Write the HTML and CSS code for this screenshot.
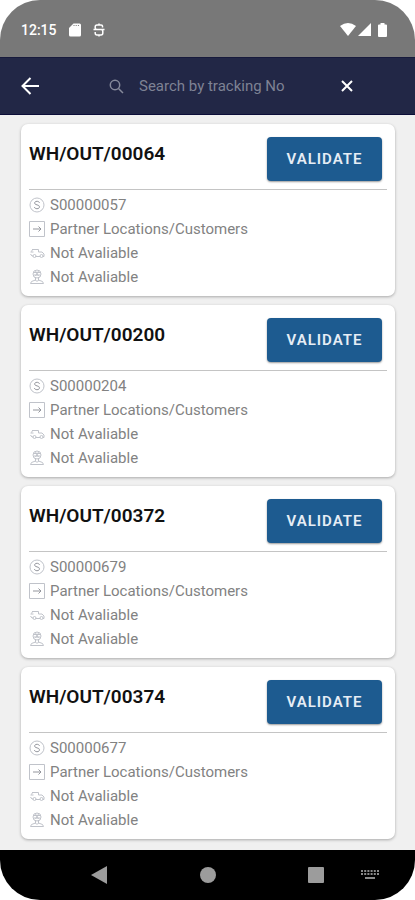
FILE: index.html
```
<!DOCTYPE html>
<html lang="en">
  <head>
    <meta charset="utf-8">
    <meta name="viewport" content="width=device-width, initial-scale=1">
    <title>Delivery Orders</title>
    <link rel="stylesheet" href="styles.css">
  </head>

  <body>
    <!-- icons shared by all cards -->
    <svg class="sprite" aria-hidden="true">
      <symbol id="i-source" viewBox="0 0 16 16">
        <circle cx="8" cy="8" r="7"/>
        <path class="dark" d="M10.500 5.800C10 4.600 9 4.300 8 4.300C6.500 4.300 5.600 5.100 5.600 6.100C5.600 8.400 10.500 7.300 10.500 9.800C10.500 11 9.500 11.700 8 11.700C6.700 11.700 5.700 11.200 5.300 10"/>
      </symbol>
      <symbol id="i-dest" viewBox="0 0 16 16">
        <path d="M.5.500h15v15H.5z"/>
        <path class="dark" d="M4 8h8M9.500 5.500L12 8l-2.500 2.500"/>
      </symbol>
      <symbol id="i-truck" viewBox="0 0 16 16">
        <path d="M4 11H3L1.500 9M1.500 7h3M3 4.500h6.500V7h3.500l2 2v2.500h-1M6.500 11.500H11M3.500 4.500L2.500 6.500"/>
        <circle cx="5.500" cy="11" r="1.500"/>
        <circle cx="12.500" cy="11" r="1.500"/>
      </symbol>
      <symbol id="i-person" viewBox="0 0 16 16">
        <circle cx="8" cy="5" r="4"/>
        <path d="M5 3.500h6M5 6h6M6.500 2l3 5M9.500 2l-3 5M6.500 9v2.500M9.500 9v2.500"/>
        <path d="M6.500 11L2.500 12.500L1.500 14.500h13l-1-2L9.500 11L8 12.500z"/>
      </symbol>
    </svg>

    <div class="phone">
      <header class="status">
        <div class="status-side">
          <span class="clock">12:15</span>
          <svg class="sd" viewBox="0 0 12 14"><path d="M4.500.500H10.500Q12 .5 12 2V12Q12 13.500 10.500 13.500H1.500Q0 13.500 0 12V5z"/><path class="slots" d="M5 2v1M7.200 2v1M9.400 2v1"/></svg>
          <svg class="s-badge" viewBox="0 0 12 14"><path d="M9.500 4.500V3Q9.500 2 8 2H4Q2.200 2 2.200 4V5Q2.200 6.500 4 6.500H8Q9.800 6.500 9.800 8.500V10Q9.800 12 8 12H4Q2.200 12 2.200 10V9M.5 6.500h11M6 .5V2M6 12v1.500"/></svg>
        </div>
        <div class="status-side signals">
          <svg class="wifi" viewBox="0 0 16 13"><path d="M0 3Q8-3 16 3L8 13z"/></svg>
          <svg class="cell" viewBox="0 0 13 13"><path d="M13 0V13H0z"/></svg>
          <svg class="battery" viewBox="0 0 9 14"><path d="M2.500 0h4v1.500H8Q9 1.500 9 2.500V13Q9 14 8 14H1Q0 14 0 13V2.500Q0 1.500 1 1.500h1.500z"/></svg>
        </div>
      </header>

      <div class="toolbar">
        <button class="back" aria-label="Back">
          <svg viewBox="0 0 18 18"><path d="M18 9H1.500M9.500 1L1.500 9l8 8"/></svg>
        </button>
        <form class="search">
          <label for="tracking" aria-label="Search">
            <svg viewBox="0 0 15 15"><circle cx="6" cy="6" r="4.700"/><path d="M9.500 9.500L14 14"/></svg>
          </label>
          <input type="text" id="tracking" placeholder="Search by tracking No">
          <button type="reset" class="clear" aria-label="Clear">
            <svg viewBox="0 0 12 12"><path d="M1 1l10 10M11 1L1 11"/></svg>
          </button>
        </form>
      </div>

      <main class="orders">
        <article class="card">
          <div class="card-head">
            <h2>WH/OUT/00064</h2>
            <button class="validate">VALIDATE</button>
          </div>
          <ul>
            <li><svg><use href="#i-source"/></svg>S00000057</li>
            <li><svg><use href="#i-dest"/></svg>Partner Locations/Customers</li>
            <li><svg><use href="#i-truck"/></svg>Not Avaliable</li>
            <li><svg><use href="#i-person"/></svg>Not Avaliable</li>
          </ul>
        </article>
        <article class="card">
          <div class="card-head">
            <h2>WH/OUT/00200</h2>
            <button class="validate">VALIDATE</button>
          </div>
          <ul>
            <li><svg><use href="#i-source"/></svg>S00000204</li>
            <li><svg><use href="#i-dest"/></svg>Partner Locations/Customers</li>
            <li><svg><use href="#i-truck"/></svg>Not Avaliable</li>
            <li><svg><use href="#i-person"/></svg>Not Avaliable</li>
          </ul>
        </article>
        <article class="card">
          <div class="card-head">
            <h2>WH/OUT/00372</h2>
            <button class="validate">VALIDATE</button>
          </div>
          <ul>
            <li><svg><use href="#i-source"/></svg>S00000679</li>
            <li><svg><use href="#i-dest"/></svg>Partner Locations/Customers</li>
            <li><svg><use href="#i-truck"/></svg>Not Avaliable</li>
            <li><svg><use href="#i-person"/></svg>Not Avaliable</li>
          </ul>
        </article>
        <article class="card">
          <div class="card-head">
            <h2>WH/OUT/00374</h2>
            <button class="validate">VALIDATE</button>
          </div>
          <ul>
            <li><svg><use href="#i-source"/></svg>S00000677</li>
            <li><svg><use href="#i-dest"/></svg>Partner Locations/Customers</li>
            <li><svg><use href="#i-truck"/></svg>Not Avaliable</li>
            <li><svg><use href="#i-person"/></svg>Not Avaliable</li>
          </ul>
        </article>
      </main>

      <nav class="navbar">
        <button aria-label="Back"><svg viewBox="0 0 18 18"><path d="M16 0V18L0 9z"/></svg></button>
        <button aria-label="Home"><svg viewBox="0 0 18 18"><circle cx="9" cy="9" r="8"/></svg></button>
        <button aria-label="Recent apps"><svg viewBox="0 0 18 18"><rect x="1" y="1" width="16" height="16" rx="1"/></svg></button>
        <button class="keyboard" aria-label="Keyboard"><svg viewBox="0 0 18 18"><path d="M0 5h18M0 8h18" stroke-dasharray="2 1.200"/><path d="M4 12h10"/></svg></button>
      </nav>
    </div>
  </body>
</html>
```

FILE: styles.css
```
* {
  box-sizing: border-box;
}
body {
  margin: 0;
  background-color: #fff;
  font-family: Roboto, sans-serif;
}
button {
  padding: 0;
  border: 0;
  background: none;
}
svg {
  display: block;
  flex: none;
}
.sprite {
  position: absolute;
  width: 0;
  height: 0;
}
.phone {
  display: flex;
  flex-direction: column;
  min-height: 100vh;
  overflow: hidden;
  border-radius: 40px;
  background-color: #f0f0f0;
}

/* status bar */
.status {
  display: flex;
  align-items: center;
  justify-content: space-between;
  height: 57px;
  padding: 2px 28px 0 21px;
  background-color: #787878;
  color: #fff;
}
.status-side {
  display: flex;
  align-items: center;
  gap: 12px;
}
.signals {
  gap: 2px;
}
.clock {
  font: 500 14px/20px Roboto, sans-serif;
}
.status svg {
  fill: #fff;
}
.sd {
  width: 12px;
  height: 14px;
}
.sd .slots {
  stroke: #787878;
}
.status .s-badge {
  width: 12px;
  height: 14px;
  fill: none;
  stroke: #fff;
  stroke-width: 1.5;
}
.wifi {
  width: 16px;
  height: 13px;
}
.cell {
  width: 13px;
  height: 13px;
}
.battery {
  width: 9px;
  height: 14px;
  margin-left: 5px;
}

/* search toolbar */
.toolbar {
  display: flex;
  align-items: center;
  height: 58px;
  padding: 0 62px 0 21px;
  border-top: 1px solid #171a3c;
  border-bottom: 1px solid #0c0d38;
  background-color: #222746;
}
.toolbar svg {
  fill: none;
  stroke: #fff;
  stroke-width: 2;
}
.back svg {
  width: 18px;
  height: 18px;
}
.search {
  display: flex;
  flex: 1;
  align-items: center;
  margin-left: 70px;
}
.search label svg {
  width: 15px;
  height: 15px;
  stroke: #868a9b;
  stroke-width: 1.5;
}
.search input {
  flex: 1;
  min-width: 0;
  padding: 0 0 0 15px;
  border: 0;
  outline: 0;
  background: none;
  color: #fff;
  font: 15px/24px Roboto, sans-serif;
}
.search input::placeholder {
  color: #7e8294;
  opacity: 1;
}
.clear svg {
  width: 12px;
  height: 12px;
}

/* order cards */
.orders {
  display: flex;
  flex: 1;
  flex-direction: column;
  gap: 9px;
  padding: 9px 20px 11px 21px;
}
.card {
  padding: 13px 8px 7px;
  border-radius: 7px;
  background-color: #fff;
  box-shadow: 0 1px 3px rgba(0, 0, 0, 0.3);
}
.card-head {
  display: flex;
  align-items: flex-start;
  justify-content: space-between;
  padding: 0 5px 8px 0;
  border-bottom: 1px solid #c4c4c4;
}
.card h2 {
  margin: 5px 0 0;
  color: #111;
  font-size: 19px;
  font-weight: 600;
  line-height: 24px;
}
.validate {
  width: 115px;
  height: 44px;
  border-radius: 4px;
  background-color: #1d5b90;
  box-shadow: 0 1px 2px rgba(0, 0, 0, 0.4);
  color: #e6edf5;
  font: 600 15px/20px Roboto, sans-serif;
  letter-spacing: 1px;
}
.card ul {
  margin: 0;
  padding: 3px 0 0;
  list-style: none;
}
.card li {
  display: flex;
  align-items: center;
  gap: 5px;
  color: #828282;
  font-size: 15px;
  line-height: 24px;
}
.card li svg {
  width: 16px;
  height: 16px;
  fill: none;
  stroke: #c0c3ca;
}
.dark {
  stroke: #93959c;
}

/* system navigation */
.navbar {
  display: flex;
  align-items: center;
  justify-content: flex-end;
  height: 50px;
  padding-right: 36px;
  background-color: #000;
}
.navbar button {
  margin-left: 90px;
}
.navbar svg {
  width: 18px;
  height: 18px;
  fill: #9c9c9c;
}
.navbar .keyboard {
  margin-left: 36px;
}
.keyboard svg {
  stroke: #8a8a8a;
  stroke-width: 2;
}
```
